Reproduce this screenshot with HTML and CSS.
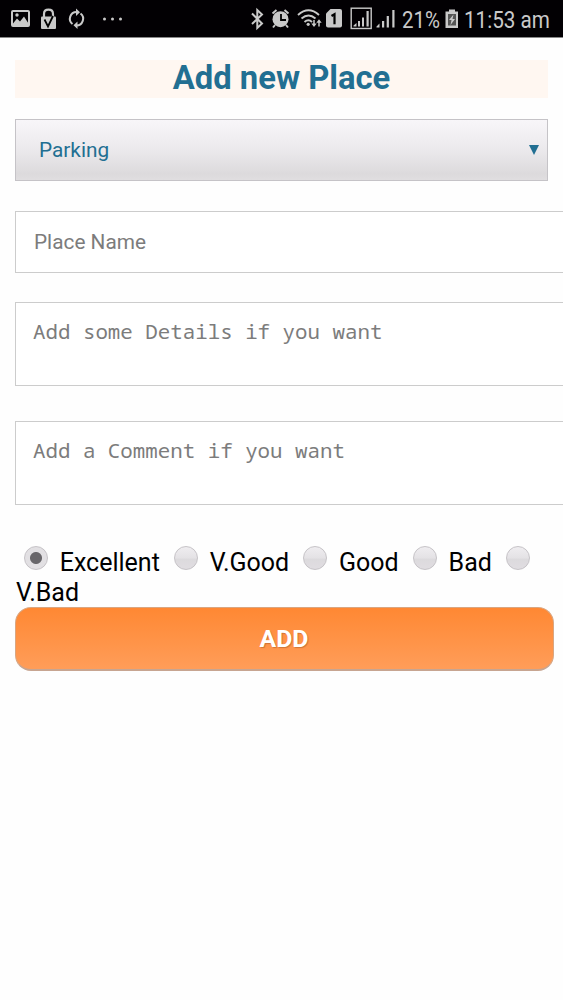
FILE: index.html
```html
<!DOCTYPE html>
<html lang="en">
<head>
    <meta charset="UTF-8">
    <meta name="viewport" content="width=device-width, initial-scale=1.0">
    <title>Add new Place</title>
    <link rel="stylesheet" href="styles.css">
</head>
<body>
    <!-- Phone status bar -->
    <header class="status-bar">
        <svg class="status-icons" viewBox="0 0 563 38" width="563" height="38" fill="#c9c9c9">
            <!-- picture -->
            <path fill-rule="evenodd" d="M13 10h15q2 0 2 2v13q0 2-2 2H13q-2 0-2-2V12q0-2 2-2zm0 2v12.500h15V12z"/>
            <path d="M13 23.500l4-5 3 3 4-5 4.500 7v1.500H13z"/>
            <circle cx="17" cy="15" r="1.700"/>
            <!-- lock -->
            <path d="M44 18v-4q0-4.300 4.500-4.300T53 14v4" fill="none" stroke="#c9c9c9" stroke-width="2.200"/>
            <rect x="41" y="16.500" width="15" height="12.500" rx="1"/>
            <path d="M44.500 19.500l3.500 7 5-10.500" fill="none" stroke="#000" stroke-width="1.800"/>
            <!-- sync -->
            <g fill="none" stroke="#c9c9c9" stroke-width="2">
                <path d="M72.500 24A6.700 6.700 0 0 1 76.500 12"/>
                <path d="M80.500 13.500A6.700 6.700 0 0 1 76.500 25.500"/>
            </g>
            <path d="M76 8.500v7.500l4-3.700zM77.500 21.500V29l-4-3.700z"/>
            <!-- more -->
            <circle cx="104.500" cy="19" r="1.500"/><circle cx="112.500" cy="19" r="1.500"/><circle cx="120.500" cy="19" r="1.500"/>
            <!-- bluetooth -->
            <path d="M252 13.500l10 10-4.700 4.500V10l4.700 4.500-10 9.500" fill="none" stroke="#c9c9c9" stroke-width="2"/>
            <!-- alarm -->
            <circle cx="280.500" cy="19.200" r="8"/>
            <path d="M272.500 13.500l4-3.500M288.500 13.500l-4-3.500M275 25l-2 2.500M286 25l2 2.500" stroke="#c9c9c9" stroke-width="2"/>
            <path d="M281 14v6h5" fill="none" stroke="#000" stroke-width="1.800"/>
            <!-- wifi -->
            <g fill="none" stroke="#c9c9c9" stroke-width="1.900">
                <path d="M298 15q10.500-9.500 21 0"/>
                <path d="M301.500 18.500q7-6 14 0"/>
                <path d="M304.500 22q4-3.500 7.500 0"/>
            </g>
            <circle cx="308.200" cy="24.300" r="1.600"/>
            <path d="M314 20v5M319 26.500v-5" stroke="#c9c9c9" stroke-width="1.500"/>
            <path d="M311.300 23.500h5.400L314 27zM316.300 22.700h5.400L319 19.200z"/>
            <!-- sim card -->
            <path d="M330.500 9H340q2 0 2 2V25.500q0 2-2 2H328q-2 0-2-2V13.500z"/>
            <path d="M331.500 16l3-1.800v10" fill="none" stroke="#000" stroke-width="2.200"/>
            <!-- signals -->
            <rect x="351.200" y="8.200" width="20" height="20.300" fill="none" stroke="#c9c9c9" stroke-width="1.400"/>
            <path d="M353.500 26.500v-1l3-2.500v3.500zM358 26.500v-5.500h2v5.500zM362 26.500v-9h2v9zM366.500 26.500V11h2.200v15.500z"/>
            <path d="M376.500 27.500v-1l3-3v4zM382 27.500v-6.500h2.200v6.500zM386.700 27.500V16h2.200v11.500zM392.300 27.500V10h2.200v17.500z"/>
            <!-- battery -->
            <path d="M449 9.500h6v2h3V28h-12.500V11.500h3.500z"/>
            <path d="M448 14h8v11.500h-8z" fill="#555"/>
            <path d="M453.500 14.500l-4.500 5.500h2.500l-1 5 4.500-6h-2.500z"/>
            <text class="status-text" x="402" y="28" textLength="38" lengthAdjust="spacingAndGlyphs">21%</text>
            <text class="status-text" x="464" y="28" textLength="86" lengthAdjust="spacingAndGlyphs">11:53 am</text>
        </svg>
    </header>

    <main class="page">
        <h1 class="title">Add new Place</h1>
        <form class="place-form">
            <div class="select-wrap">
                <select class="place-type">
                    <option>Parking</option>
                </select>
                <svg class="arrow" viewBox="0 0 10 10" width="10" height="10"><path d="M0 0h10L5 10z" fill="#226f92"/></svg>
            </div>
            <input class="field" type="text" placeholder="Place Name">
            <textarea class="field area" placeholder="Add some Details if you want"></textarea>
            <textarea class="field area" placeholder="Add a Comment if you want"></textarea>
            <div class="rating">
                <input type="radio" name="rate" checked> Excellent
                <input type="radio" name="rate"> V.Good
                <input type="radio" name="rate"> Good
                <input type="radio" name="rate"> Bad
                <input type="radio" name="rate"> V.Bad
            </div>
            <button class="add-btn" type="button">ADD</button>
        </form>
    </main>
</body>
</html>
```
FILE: styles.css
```css
* {
    box-sizing: border-box;
}

body {
    margin: 0;
    background: #fefefe;
    color: #000;
    font-family: Roboto, sans-serif;
    overflow-x: hidden;
}

.status-bar {
    height: 38px;
    background: linear-gradient(#020003 37px, #888 37px);
}

.status-icons {
    display: block;
}

.status-text {
    font-family: Roboto, sans-serif;
    font-size: 24px;
}

.page {
    padding: 22px 15px 0;
}

.title {
    margin: 0 0 21px;
    width: 533px;
    height: 38px;
    line-height: 37px;
    background: #fff7f1;
    color: #226f92;
    font-size: 32.8px;
    font-weight: 700;
    text-align: center;
}

.place-form {
    display: flex;
    flex-direction: column;
    align-items: flex-start;
}

.select-wrap {
    position: relative;
    width: 533px;
    height: 62px;
    margin-bottom: 30px;
}

.place-type {
    appearance: none;
    display: block;
    width: 100%;
    height: 100%;
    padding: 0 24px 1px 23px;
    border: 1px solid #c5c3c7;
    border-radius: 0;
    background: linear-gradient(#f8f6f9, #ebe9ec 50%, #dcdadc 90%, #e0dee0);
    color: #226f92;
    font-family: Roboto, sans-serif;
    font-size: 20.8px;
}

/* Sits over the right end of the select */
.arrow {
    position: absolute;
    right: 9px;
    top: 26px;
}

.field {
    display: block;
    width: 570px;
    height: 62px;
    margin: 0 0 29px;
    padding: 0 18px;
    border: 1px solid #ccc;
    border-radius: 0;
    background: #fff;
    font-family: Roboto, sans-serif;
    font-size: 20.8px;
}

.field::placeholder {
    color: #7c7c7c;
    opacity: 1;
}

.area {
    height: 84px;
    margin-bottom: 35px;
    padding: 16px 17px;
    line-height: 25px;
    resize: none;
    font-family: "Noto Sans Mono", "Droid Sans Mono", "DejaVu Sans Mono", monospace;
    font-size: 20.8px;
}

.rating {
    width: 533px;
    height: 61px;
    margin-top: 6px;
    padding-left: 1px;
    font-size: 25px;
    line-height: 30px;
}

.rating input {
    appearance: none;
    width: 24px;
    height: 24px;
    margin: 0 5.5px 0 8px;
    border: 1px solid #c6c3c7;
    border-radius: 50%;
    background: linear-gradient(#efedf0, #e4e2e5 50%, #dcdadd 55%, #e0dde1);
    vertical-align: 1px;
}

.rating input:checked {
    background: radial-gradient(circle, #68666a 5.5px, #e2e0e3 6.5px);
}

.add-btn {
    width: 539px;
    height: 64px;
    padding: 0 7px 0 6px;
    border: 1px solid #d9a681;
    border-bottom: 2px solid #c7a591;
    border-radius: 16px;
    background: linear-gradient(#ff8833, #ff9d59);
    color: #fff;
    font-family: Roboto, sans-serif;
    font-size: 24.8px;
    font-weight: 700;
    text-shadow: 1px 1px 1px rgba(120, 60, 20, 0.35);
}
```
